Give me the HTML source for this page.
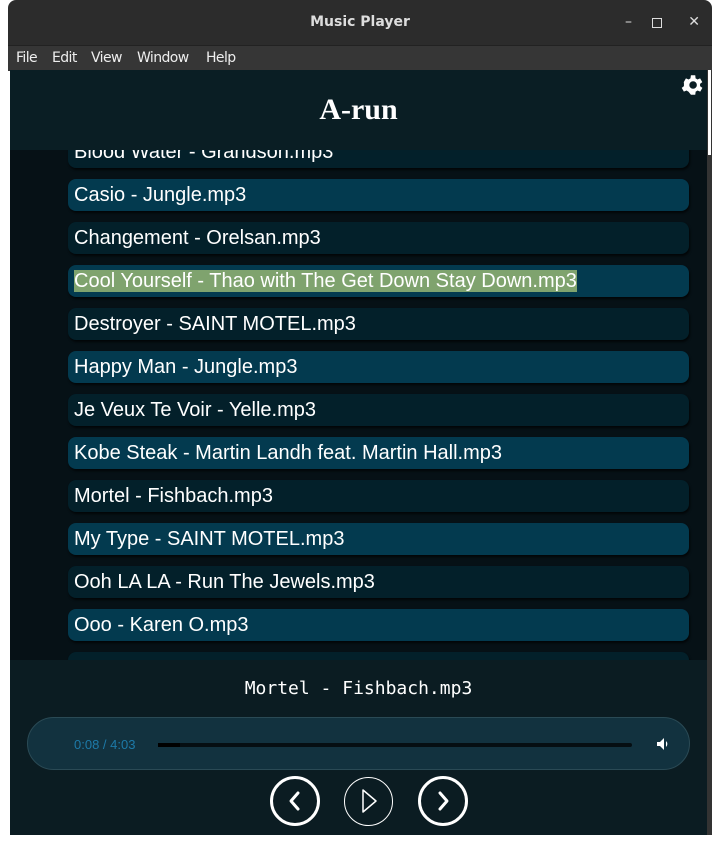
<!DOCTYPE html><html><head><style>
body{margin:0;width:720px;height:845px;background:#fff;position:relative;overflow:hidden;font-family:"Liberation Sans",sans-serif}
.t{position:absolute;left:8px;top:0;width:704px;height:45px;background:#2c2c2c;border-radius:8px 8px 0 0;color:#ddd;font:bold 14px "DejaVu Sans",sans-serif;text-align:center;line-height:45px}
.m{position:absolute;left:8px;top:45px;width:704px;height:25px;background:#363636;border-top:1px solid #222;color:#eee;font:14px "DejaVu Sans",sans-serif;line-height:24px;letter-spacing:-0.6px}
.m span{position:absolute;top:0}
.app{position:absolute;left:10px;top:70px;width:697px;height:765px;background:#061116;overflow:hidden}
.side{position:absolute;left:707px;top:70px;width:5px;height:765px;background:#333}
.hd{position:absolute;left:0;top:0;width:697px;height:80px;background:#0a1e24;color:#fff;font:bold 30px "Liberation Serif",serif;text-align:center;line-height:80px;z-index:2}
.it{position:absolute;left:58px;width:621px;height:32px;border-radius:8px;color:#fff;font-size:20px;line-height:33px;padding-left:6px;box-sizing:border-box;box-shadow:1px 2px 2px #000a;white-space:nowrap}
.d{background:#03202a}.b{background:#033a4f}
.bt{position:absolute;left:0;top:590px;width:697px;height:175px;background:#0b1c22;z-index:2}
.c{position:absolute;top:116px;width:44px;height:44px;border:3px solid #fff;border-radius:50%}
</style></head><body>
<div class="t">Music Player<span style="position:absolute;right:80px;font-weight:normal">–</span><span style="position:absolute;right:50px;top:18px;width:8px;height:8px;border:1px solid #ddd;line-height:0"></span><span style="position:absolute;right:12px;font-weight:normal">✕</span></div>
<div class="m"><span style="left:8px">File</span><span style="left:44px">Edit</span><span style="left:83px">View</span><span style="left:129px">Window</span><span style="left:198px">Help</span></div>
<div class="side"><div style="position:absolute;left:1px;top:0;width:3px;height:85px;background:#fff"></div></div>
<div class="app">
<div class="hd">A-run
<svg style="position:absolute;right:2px;top:2px" width="26" height="26" viewBox="0 0 24 24"><path fill="#fff" d="M19.4 13a7.5 7.5 0 0 0 0-2l2.1-1.6-2-3.5-2.5 1a7 7 0 0 0-1.7-1L15 3h-4l-.4 2.9a7 7 0 0 0-1.7 1l-2.5-1-2 3.5L4.6 11a7.5 7.5 0 0 0 0 2l-2.1 1.6 2 3.5 2.5-1a7 7 0 0 0 1.7 1L11 21h4l.4-2.9a7 7 0 0 0 1.7-1l2.5 1 2-3.5zM13 15.5A3.5 3.5 0 1 1 13 8.5a3.5 3.5 0 0 1 0 7z"/></svg></div>
<div class="it d" style="top:66px">Blood Water - Grandson.mp3</div>
<div class="it b" style="top:109px">Casio - Jungle.mp3</div>
<div class="it d" style="top:152px">Changement - Orelsan.mp3</div>
<div class="it b" style="top:195px"><span style="background:#7fa36e">Cool Yourself - Thao with The Get Down Stay Down.mp3</span></div>
<div class="it d" style="top:238px">Destroyer - SAINT MOTEL.mp3</div>
<div class="it b" style="top:281px">Happy Man - Jungle.mp3</div>
<div class="it d" style="top:324px">Je Veux Te Voir - Yelle.mp3</div>
<div class="it b" style="top:367px">Kobe Steak - Martin Landh feat. Martin Hall.mp3</div>
<div class="it d" style="top:410px">Mortel - Fishbach.mp3</div>
<div class="it b" style="top:453px">My Type - SAINT MOTEL.mp3</div>
<div class="it d" style="top:496px">Ooh LA LA - Run The Jewels.mp3</div>
<div class="it b" style="top:539px">Ooo - Karen O.mp3</div>
<div class="it d" style="top:582px"></div>
<div class="bt">
<div style="position:absolute;left:0;width:697px;top:18px;text-align:center;color:#fff;font:18px 'DejaVu Sans Mono','Liberation Mono',monospace">Mortel - Fishbach.mp3</div>
<div style="position:absolute;left:17px;top:57px;width:663px;height:53px;border-radius:27px;background:#12323f;border:1px solid #2a4a55;box-sizing:border-box">
<span style="position:absolute;left:46px;top:19px;font-size:13px;color:#1d7aa8">0:08 / 4:03</span>
<div style="position:absolute;left:130px;top:25px;width:474px;height:4px;background:#050e12;border-radius:2px"><div style="width:22px;height:4px;background:#000"></div></div>
<svg style="position:absolute;left:628px;top:19px" width="14" height="14" viewBox="0 0 14 14"><path fill="#fff" d="M1 5h3l4-4v12l-4-4H1z M10 4a4 4 0 0 1 0 6z"/></svg>
</div>
<div class="c" style="left:260px"><svg width="44" height="44"><path d="M25 14l-7 8 7 8" stroke="#fff" stroke-width="3" fill="none" stroke-linecap="round" stroke-linejoin="round"/></svg></div>
<div class="c" style="left:334px;border-width:1.5px;width:47px;height:47px;top:117px"><svg width="47" height="47"><path d="M18 12v22l13-11z" stroke="#fff" stroke-width="1.5" fill="none" stroke-linejoin="round"/></svg></div>
<div class="c" style="left:408px"><svg width="44" height="44"><path d="M19 14l7 8-7 8" stroke="#fff" stroke-width="3" fill="none" stroke-linecap="round" stroke-linejoin="round"/></svg></div>
</div>
</div>
</body></html>
